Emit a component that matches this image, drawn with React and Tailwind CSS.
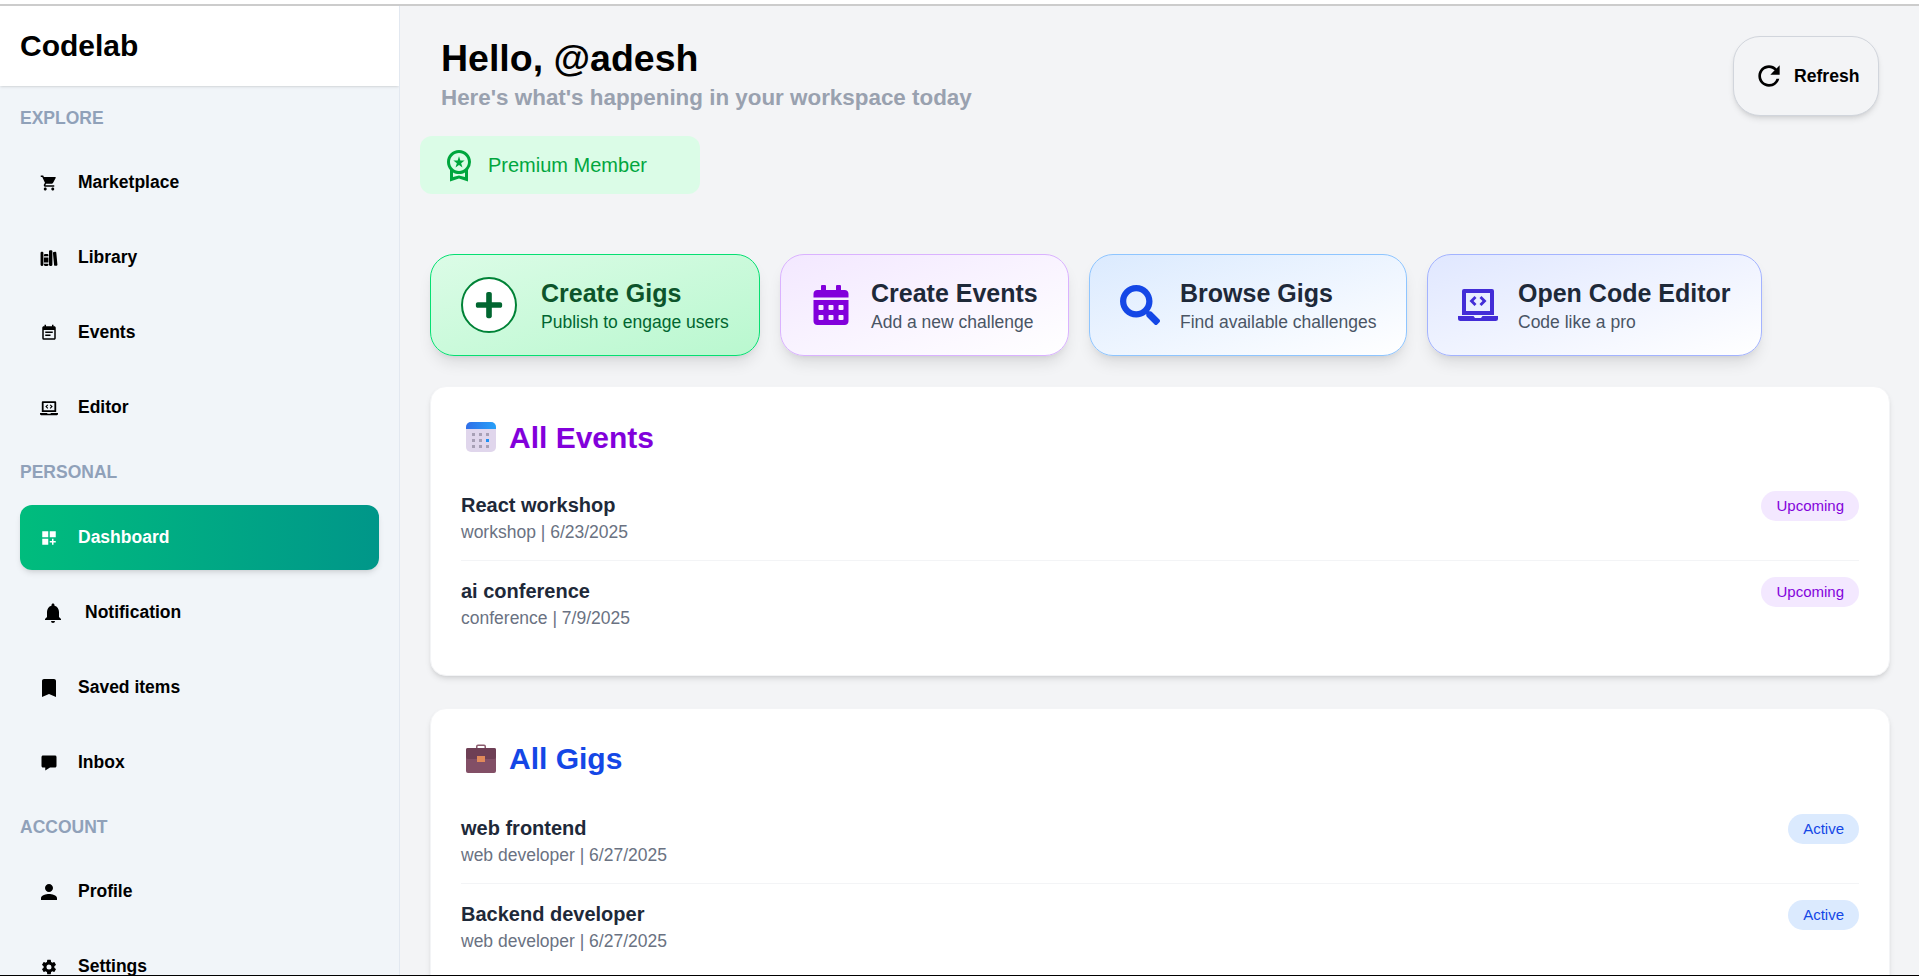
import React from "react";
import {
  MdShoppingCart,
  MdEventNote,
  MdDashboardCustomize,
  MdNotifications,
  MdBookmark,
  MdPerson,
  MdRefresh,
  MdOutlineWorkspacePremium,
} from "react-icons/md";
import { IoLibrary, IoSettingsSharp } from "react-icons/io5";
import { BiSolidMessage } from "react-icons/bi";
import { FaCalendarAlt, FaSearch, FaPlus } from "react-icons/fa";

const LaptopCode = ({ className }) => (
  <svg viewBox="0 0 40 40" className={className} fill="currentColor">
    <path fillRule="evenodd" d="M6 4h28a2 2 0 0 1 2 2v24H4V6a2 2 0 0 1 2-2zm2 4v18h24V8z" />
    <path d="M0 31h15.5l1.5 2h6l1.5-2H40v2.5a2.5 2.5 0 0 1-2.500 2.500h-35A2.500 2.500 0 0 1 0 33.500z" />
    <path d="M16.500 11l2 2-3 3 3 3-2 2-5-5zM23.500 11l5 5-5 5-2-2 3-3-3-3z" />
  </svg>
);

const LaptopSmall = ({ className }) => (
  <svg viewBox="0 0 40 40" className={className} fill="currentColor">
    <path fillRule="evenodd" d="M6 5h28a2 2 0 0 1 2 2v22H4V7a2 2 0 0 1 2-2zm2 4v16h24V9z" />
    <path d="M0 31h15.5l1.5 2h6l1.5-2H40v2.500a2.500 2.500 0 0 1-2.500 2.500h-35A2.500 2.500 0 0 1 0 33.500z" />
    <path d="M16.500 12l1.800 1.800-3 3 3 3-1.800 1.800-4.800-4.800zM23.500 12l4.800 4.800-4.800 4.800-1.800-1.800 3-3-3-3z" />
  </svg>
);

const CalendarEmoji = () => (
  <svg viewBox="0 0 30 30" className="w-[30px] h-[30px] shrink-0">
    <defs>
      <linearGradient id="calTop" x1="0" y1="0" x2="1" y2="0">
        <stop offset="0" stopColor="#2f6fe8" />
        <stop offset="1" stopColor="#27a0f8" />
      </linearGradient>
    </defs>
    <rect x="0" y="0" width="30" height="30" rx="5" fill="#e0d6ec" />
    <path d="M0 7V5a5 5 0 0 1 5-5h20a5 5 0 0 1 5 5v2z" fill="url(#calTop)" />
    <g fill="#a79fb5">
      <rect x="6" y="11" width="3" height="3" />
      <rect x="13" y="11" width="3" height="3" />
      <rect x="20" y="11" width="3" height="3" />
      <rect x="6" y="17" width="3" height="3" />
      <rect x="13" y="17" width="3" height="3" />
      <rect x="6" y="23" width="3" height="3" />
      <rect x="13" y="23" width="3" height="3" />
      <rect x="20" y="23" width="3" height="3" />
    </g>
    <rect x="20" y="17" width="3" height="3" fill="#1e90f5" />
  </svg>
);

const BriefcaseEmoji = () => (
  <svg viewBox="0 0 30 30" className="w-[30px] h-[30px] shrink-0">
    <path d="M10 7V3.500a2 2 0 0 1 2-2h6a2 2 0 0 1 2 2V7h-1.500V3.500a.5.5 0 0 0-.5-.5h-6a.5.5 0 0 0-.5.5V7z" fill="#8a5a6c" />
    <rect x="0" y="5" width="30" height="25" rx="2" fill="#824f66" />
    <rect x="0" y="5" width="30" height="11" rx="2" fill="#6e3f55" />
    <rect x="11" y="13" width="8" height="6" fill="#e0895a" />
  </svg>
);

const NavItem = ({ icon: Icon, label, active, iconClass }) => (
  <div
    className={`flex items-center h-[65px] rounded-xl px-[20px] gap-[20px] ${
      active
        ? "bg-gradient-to-r from-emerald-500 to-teal-600 text-white shadow-md"
        : "text-black"
    }`}
  >
    <Icon className={iconClass || "w-[18px] h-[18px] shrink-0"} />
    <span className="text-[17.5px] font-bold leading-none">{label}</span>
  </div>
);

const SectionLabel = ({ children, className }) => (
  <div className={`text-[17.5px] font-bold text-slate-400 leading-none ${className}`}>
    {children}
  </div>
);

const Sidebar = () => (
  <aside className="w-[400px] shrink-0 bg-slate-100 border-r border-slate-200 h-full overflow-hidden">
    <div className="h-[80px] bg-white shadow-sm flex items-center px-[20px]">
      <h1 className="text-[30px] font-bold text-black -mt-[2px]">Codelab</h1>
    </div>
    <div className="px-[20px]">
      <SectionLabel className="mt-[24px] mb-[22.5px]">EXPLORE</SectionLabel>
      <div className="flex flex-col gap-[10px]">
        <NavItem icon={MdShoppingCart} label="Marketplace" />
        <NavItem icon={IoLibrary} label="Library" />
        <NavItem icon={MdEventNote} label="Events" />
        <NavItem icon={LaptopSmall} label="Editor" />
      </div>
      <SectionLabel className="mt-[24px] mb-[23.5px]">PERSONAL</SectionLabel>
      <div className="flex flex-col gap-[10px]">
        <NavItem icon={MdDashboardCustomize} label="Dashboard" active />
        <NavItem
          icon={MdNotifications}
          label="Notification"
          iconClass="w-[24px] h-[24px] shrink-0 ml-[1px]"
        />
        <NavItem icon={MdBookmark} label="Saved items" iconClass="w-[24px] h-[24px] shrink-0 -mx-[3px]" />
        <NavItem icon={BiSolidMessage} label="Inbox" />
      </div>
      <SectionLabel className="mt-[24px] mb-[22.5px]">ACCOUNT</SectionLabel>
      <div className="flex flex-col gap-[10px]">
        <NavItem icon={MdPerson} label="Profile" iconClass="w-[24px] h-[24px] shrink-0 -mx-[3px]" />
        <NavItem icon={IoSettingsSharp} label="Settings" iconClass="w-[16px] h-[16px] shrink-0 mx-[1px]" />
      </div>
    </div>
  </aside>
);

const ActionCard = ({ icon, title, sub, wrapClass, titleClass, subClass, gapClass }) => (
  <div
    className={`flex items-center border rounded-3xl p-[30px] h-[102px] shadow-lg bg-gradient-to-br ${gapClass || "gap-[20px]"} ${wrapClass}`}
  >
    {icon}
    <div className="whitespace-nowrap">
      <div className={`text-[25px] font-bold leading-[32px] ${titleClass || "text-gray-800"}`}>{title}</div>
      <div className={`text-[17.5px] leading-[24px] mt-[1px] ${subClass || "text-gray-600"}`}>{sub}</div>
    </div>
  </div>
);

const Row = ({ title, sub, badge, badgeClass, last }) => (
  <div className={`flex justify-between items-start pt-[16px] ${last ? "pb-[14px]" : "border-b border-gray-100 pb-[15px]"}`}>
    <div>
      <div className="text-[20px] font-bold text-gray-800 leading-[28px]">{title}</div>
      <div className="text-[17.5px] text-gray-500 leading-[26px]">{sub}</div>
    </div>
    <span className={`rounded-full h-[30px] flex items-center px-[15px] text-[15px] ${badgeClass}`}>{badge}</span>
  </div>
);

const ListCard = ({ icon, title, titleClass, headClass, children }) => (
  <section className="bg-white rounded-2xl shadow-md border border-gray-100 p-[30px]">
    <div className={`flex items-center gap-[13px] px-[5px] h-[40px] ${headClass}`}>
      {icon}
      <h2 className={`text-[30px] font-bold ${titleClass}`}>{title}</h2>
    </div>
    {children}
  </section>
);

export default function App() {
  return (
    <div className="h-screen w-full overflow-hidden bg-white flex flex-col font-['Liberation_Sans',Arial,sans-serif]">
      <div className="h-[4px] shrink-0 bg-white" />
      <div className="h-[2px] shrink-0 bg-[#cccccc]" />
      <div className="flex-1 min-h-0 flex">
        <Sidebar />
        <main className="flex-1 min-w-0 bg-gray-100 h-full overflow-hidden">
          <div className="flex justify-between pl-[41px] pr-[40px] pt-[30px]">
            <div className="-mt-[1px]">
              <div className="text-[37.5px] font-bold text-black leading-[46px] mb-[1px]">Hello, @adesh</div>
              <div className="text-[22.4px] font-bold text-gray-400 leading-[32px]">
                Here's what's happening in your workspace today
              </div>
            </div>
            <button className="h-[80px] w-[146px] rounded-[27px] border border-gray-300 bg-gray-100 shadow-md flex items-center pl-[19px] gap-[9px] text-black">
              <MdRefresh className="w-[32px] h-[32px]" />
              <span className="text-[17.6px] font-bold">Refresh</span>
            </button>
          </div>
          <div className="ml-[20px] mt-[20px] w-[280px] h-[58px] rounded-xl bg-green-100 text-green-600 flex items-center pl-[21px] gap-[11px]">
            <MdOutlineWorkspacePremium className="w-[36px] h-[36px]" />
            <span className="text-[20px]">Premium Member</span>
          </div>
          <div className="flex gap-[20px] ml-[30px] mt-[60px]">
            <ActionCard
              wrapClass="w-[330px] from-green-100 to-green-200 border-green-400"
              titleClass="text-green-900"
              subClass="text-green-800"
              gapClass="gap-[24px]"
              icon={
                <div className="w-[56px] h-[56px] shrink-0 rounded-full bg-white border-2 border-green-700 text-green-800 flex items-center justify-center">
                  <FaPlus className="w-[30px] h-[30px]" />
                </div>
              }
              title="Create Gigs"
              sub="Publish to engage users"
            />
            <ActionCard
              wrapClass="w-[289px] from-purple-100 to-white border-purple-300"
              icon={<FaCalendarAlt className="w-[40px] h-[40px] shrink-0 text-purple-700" />}
              title="Create Events"
              sub="Add a new challenge"
            />
            <ActionCard
              wrapClass="w-[318px] from-blue-100 to-white border-blue-300"
              icon={<FaSearch className="w-[40px] h-[40px] shrink-0 text-blue-700" />}
              title="Browse Gigs"
              sub="Find available challenges"
            />
            <ActionCard
              wrapClass="w-[335px] from-indigo-100 to-white border-indigo-300"
              icon={<LaptopCode className="w-[40px] h-[40px] shrink-0 text-indigo-700" />}
              title="Open Code Editor"
              sub="Code like a pro"
            />
          </div>
          <div className="ml-[30px] mr-[29px] mt-[30px] flex flex-col gap-[32px]">
            <ListCard icon={<CalendarEmoji />} title="All Events" titleClass="text-purple-700" headClass="mb-[18px]">
              <Row title="React workshop" sub="workshop | 6/23/2025" badge="Upcoming" badgeClass="bg-purple-100 text-purple-700" />
              <Row title="ai conference" sub="conference | 7/9/2025" badge="Upcoming" badgeClass="bg-purple-100 text-purple-700" last />
            </ListCard>
            <ListCard icon={<BriefcaseEmoji />} title="All Gigs" titleClass="text-blue-700" headClass="-mt-[1px] mb-[20px]">
              <Row title="web frontend" sub="web developer | 6/27/2025" badge="Active" badgeClass="bg-blue-100 text-blue-700" />
              <Row title="Backend developer" sub="web developer | 6/27/2025" badge="Active" badgeClass="bg-blue-100 text-blue-700" last />
            </ListCard>
          </div>
        </main>
      </div>
      <div className="h-[1px] shrink-0 bg-black" />
    </div>
  );
}
